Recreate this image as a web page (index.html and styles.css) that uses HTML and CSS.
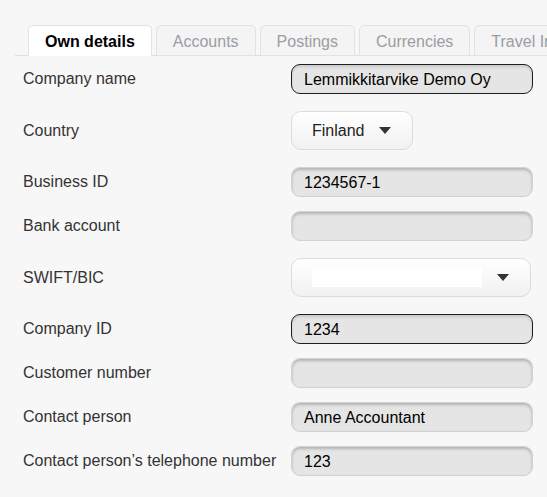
FILE: index.html
```html
<!DOCTYPE html>
<html>
<head>
<meta charset="utf-8">
<link rel="stylesheet" href="styles.css">
</head>
<body>
<div class="page">
  <div class="tabs">
    <div class="tab active">Own details</div>
    <div class="tab">Accounts</div>
    <div class="tab">Postings</div>
    <div class="tab">Currencies</div>
    <div class="tab">Travel Invoices</div>
  </div>
  <div class="form">
    <div class="row">
      <label class="lbl">Company name</label>
      <input class="field strong" type="text" value="Lemmikkitarvike Demo Oy">
    </div>
    <div class="row row-select">
      <label class="lbl">Country</label>
      <div class="select country"><span class="sel-text">Finland</span><span class="caret"></span></div>
    </div>
    <div class="row">
      <label class="lbl">Business ID</label>
      <input class="field" type="text" value="1234567-1">
    </div>
    <div class="row">
      <label class="lbl">Bank account</label>
      <input class="field" type="text" value="">
    </div>
    <div class="row row-select">
      <label class="lbl">SWIFT/BIC</label>
      <div class="select swift"><span class="sel-blank"></span><span class="caret"></span></div>
    </div>
    <div class="row">
      <label class="lbl">Company ID</label>
      <input class="field strong" type="text" value="1234">
    </div>
    <div class="row">
      <label class="lbl">Customer number</label>
      <input class="field" type="text" value="">
    </div>
    <div class="row">
      <label class="lbl">Contact person</label>
      <input class="field" type="text" value="Anne Accountant">
    </div>
    <div class="row">
      <label class="lbl">Contact person’s telephone number</label>
      <input class="field" type="text" value="123">
    </div>
  </div>
</div>
</body>
</html>
```
FILE: styles.css
```css
* { box-sizing: border-box; }
html, body {
  margin: 0;
  padding: 0;
  background: #f7f7f7;
  font-family: "Liberation Sans", Arial, sans-serif;
  font-size: 16px;
  overflow: hidden;
}
.page {
  width: 547px;
  height: 497px;
  overflow: hidden;
  padding-top: 25px;
}
.tabs {
  display: flex;
  gap: 4px;
  margin-left: 15px;
  padding-left: 13px;
  border-bottom: 1px solid #dedede;
  height: 31px;
  white-space: nowrap;
}
.tab {
  flex: none;
  height: 31px;
  line-height: 29px;
  padding: 1px 16px 0;
  border: 1px solid #e2e2e2;
  border-radius: 5px 5px 0 0;
  background: #f4f4f4;
  color: #9a9da3;
  font-size: 16px;
}
.tab.active {
  background: #fff;
  color: #000;
  font-weight: bold;
  border-bottom-color: #fff;
}
.form {
  padding-top: 1px;
}
.row {
  display: grid;
  grid-template-columns: 268px auto;
  align-items: center;
  padding-left: 23px;
  margin: 14px 0;
}
.row:first-child {
  margin-top: 7px;
}
.row-select {
  margin: 17px 0;
}
.lbl {
  color: #333;
  font-size: 16px;
}
.field {
  width: 242px;
  height: 30px;
  margin: 0;
  padding: 2px 12px 0;
  border: 1px solid #d2d2d2;
  border-radius: 9px;
  background: #e5e5e5;
  box-shadow: inset 0 2px 3px rgba(0,0,0,0.22);
  font-family: "Liberation Sans", Arial, sans-serif;
  font-size: 16px;
  color: #000;
  outline: none;
}
.field.strong {
  border-color: #1e1e1e;
  box-shadow: inset 0 2px 3px rgba(0,0,0,0.12);
}
.select {
  display: flex;
  align-items: center;
  height: 39px;
  border: 1px solid #dcdcdc;
  border-radius: 10px;
  background: linear-gradient(#ffffff, #f1f1f1);
  color: #222;
}
.country {
  width: 122px;
  padding: 0 21px 0 20px;
}
.sel-text {
  flex: 1;
}
.swift {
  width: 240px;
  padding: 0 21px 0 20px;
}
.sel-blank {
  width: 170px;
  height: 19px;
  background: #fff;
  margin-right: auto;
}
.caret {
  width: 0;
  height: 0;
  border-left: 6.5px solid transparent;
  border-right: 6.5px solid transparent;
  border-top: 7px solid #333;
}
```
